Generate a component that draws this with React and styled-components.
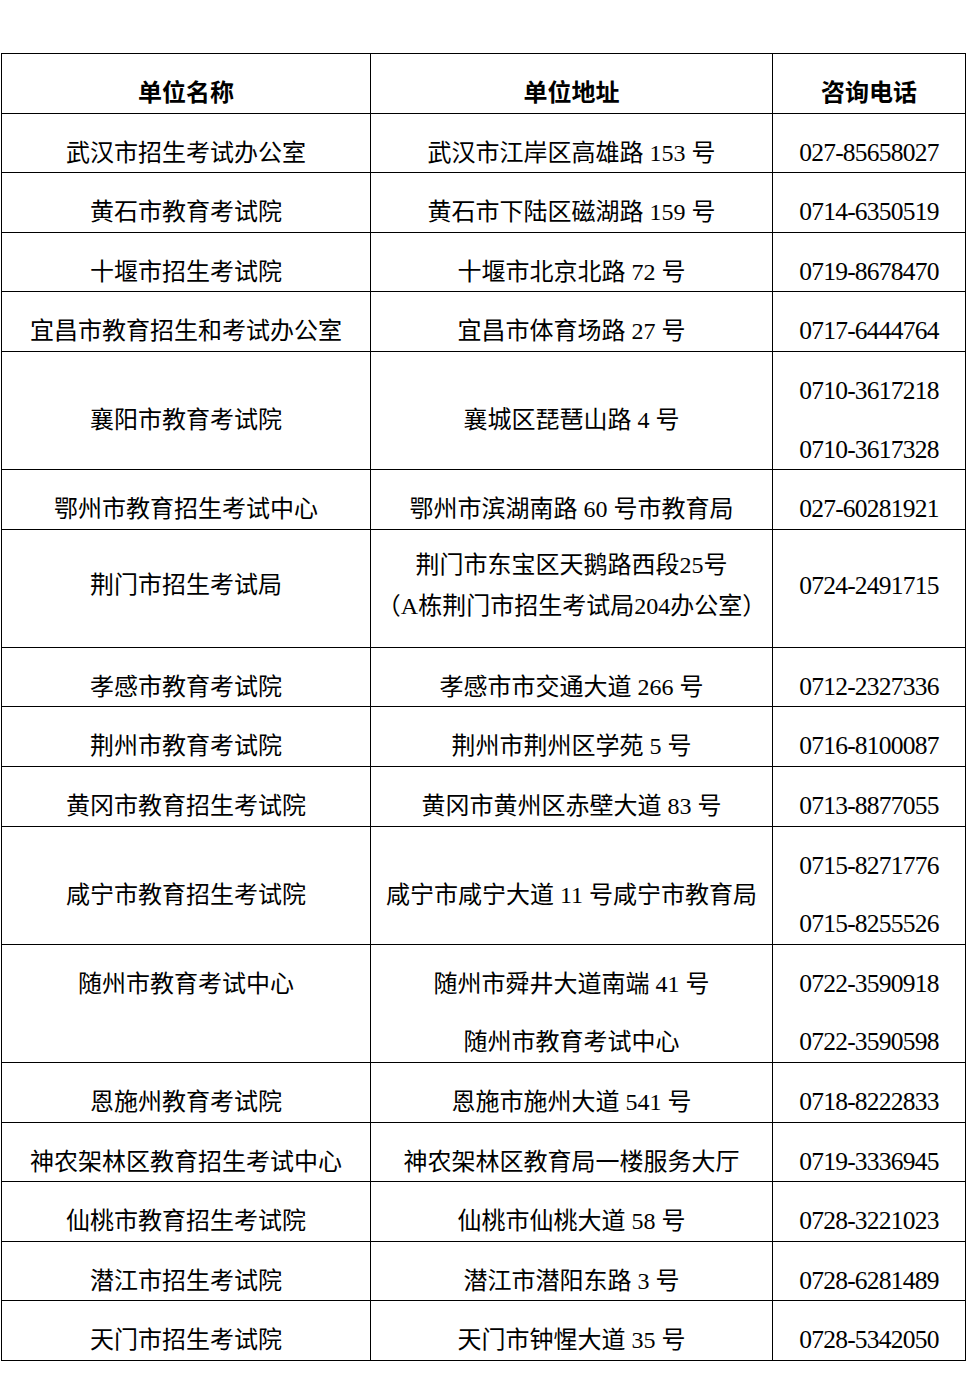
import React from "react";
import styled, { createGlobalStyle } from "styled-components";

const Global = createGlobalStyle`
  html, body { margin: 0; padding: 0; background: #fff; }
  body { font-family: "Liberation Serif", "Noto Sans CJK SC", serif; color: #000; }
`;

const Page = styled.div`
  padding: 53px 0 28px 1px;
`;

const Table = styled.table`
  border-collapse: collapse;
  table-layout: fixed;
  width: 964px;
  border: 1.5px solid #000;
`;

const Row = styled.tr`
  height: ${(p) => (p.$h ? `${p.$h}px` : "auto")};
`;

const Cell = styled.td`
  border: 1px solid #000;
  padding: 0;
  text-align: center;
  vertical-align: ${(p) => p.$valign || "middle"};
  font-size: ${(p) => (p.$num ? "25.5px" : "24px")};
  letter-spacing: ${(p) => (p.$num ? "-0.75px" : "0")};
  font-weight: ${(p) => (p.$head ? 700 : 400)};
`;

const Line = styled.div`
  box-sizing: border-box;
  height: 58.6px;
  padding-top: 19px;
  line-height: 40px;
  white-space: nowrap;
`;

const CompactStack = styled.div`
  padding-bottom: 5px;
`;

const CompactLine = styled.div`
  line-height: 41px;
  white-space: nowrap;
`;

const rows = [
  { name: "武汉市招生考试办公室", addr: ["武汉市江岸区高雄路 153 号"], phone: ["027-85658027"] },
  { name: "黄石市教育考试院", addr: ["黄石市下陆区磁湖路 159 号"], phone: ["0714-6350519"] },
  { name: "十堰市招生考试院", addr: ["十堰市北京北路 72 号"], phone: ["0719-8678470"] },
  { name: "宜昌市教育招生和考试办公室", addr: ["宜昌市体育场路 27 号"], phone: ["0717-6444764"] },
  { name: "襄阳市教育考试院", addr: ["襄城区琵琶山路 4 号"], phone: ["0710-3617218", "0710-3617328"] },
  { name: "鄂州市教育招生考试中心", addr: ["鄂州市滨湖南路 60 号市教育局"], phone: ["027-60281921"] },
  {
    name: "荆门市招生考试局",
    addr: ["荆门市东宝区天鹅路西段25号", "（A栋荆门市招生考试局204办公室）"],
    phone: ["0724-2491715"],
    compact: true,
  },
  { name: "孝感市教育考试院", addr: ["孝感市市交通大道 266 号"], phone: ["0712-2327336"] },
  { name: "荆州市教育考试院", addr: ["荆州市荆州区学苑 5 号"], phone: ["0716-8100087"] },
  { name: "黄冈市教育招生考试院", addr: ["黄冈市黄州区赤壁大道 83 号"], phone: ["0713-8877055"] },
  { name: "咸宁市教育招生考试院", addr: ["咸宁市咸宁大道 11 号咸宁市教育局"], phone: ["0715-8271776", "0715-8255526"] },
  {
    name: "随州市教育考试中心",
    addr: ["随州市舜井大道南端 41 号", "随州市教育考试中心"],
    phone: ["0722-3590918", "0722-3590598"],
    valign: "top",
  },
  { name: "恩施州教育考试院", addr: ["恩施市施州大道 541 号"], phone: ["0718-8222833"] },
  { name: "神农架林区教育招生考试中心", addr: ["神农架林区教育局一楼服务大厅"], phone: ["0719-3336945"] },
  { name: "仙桃市教育招生考试院", addr: ["仙桃市仙桃大道 58 号"], phone: ["0728-3221023"] },
  { name: "潜江市招生考试院", addr: ["潜江市潜阳东路 3 号"], phone: ["0728-6281489"] },
  { name: "天门市招生考试院", addr: ["天门市钟惺大道 35 号"], phone: ["0728-5342050"] },
];

function Lines({ items, compact }) {
  if (compact) {
    return (
      <CompactStack>
        {items.map((t, i) => (
          <CompactLine key={i}>{t}</CompactLine>
        ))}
      </CompactStack>
    );
  }
  return items.map((t, i) => <Line key={i}>{t}</Line>);
}

export default function App() {
  return (
    <>
      <Global />
      <Page>
        <Table>
          <colgroup>
            <col style={{ width: 369 }} />
            <col style={{ width: 402 }} />
            <col style={{ width: 193 }} />
          </colgroup>
          <tbody>
            <Row>
              <Cell $head><Line>单位名称</Line></Cell>
              <Cell $head><Line>单位地址</Line></Cell>
              <Cell $head><Line>咨询电话</Line></Cell>
            </Row>
            {rows.map((r) => (
              <Row key={r.name} $h={r.compact ? 118 : undefined}>
                <Cell $valign={r.valign}>
                  <Lines items={[r.name]} compact={r.compact} />
                </Cell>
                <Cell $valign={r.valign}>
                  <Lines items={r.addr} compact={r.compact} />
                </Cell>
                <Cell $valign={r.valign} $num>
                  <Lines items={r.phone} compact={r.compact} />
                </Cell>
              </Row>
            ))}
          </tbody>
        </Table>
      </Page>
    </>
  );
}
